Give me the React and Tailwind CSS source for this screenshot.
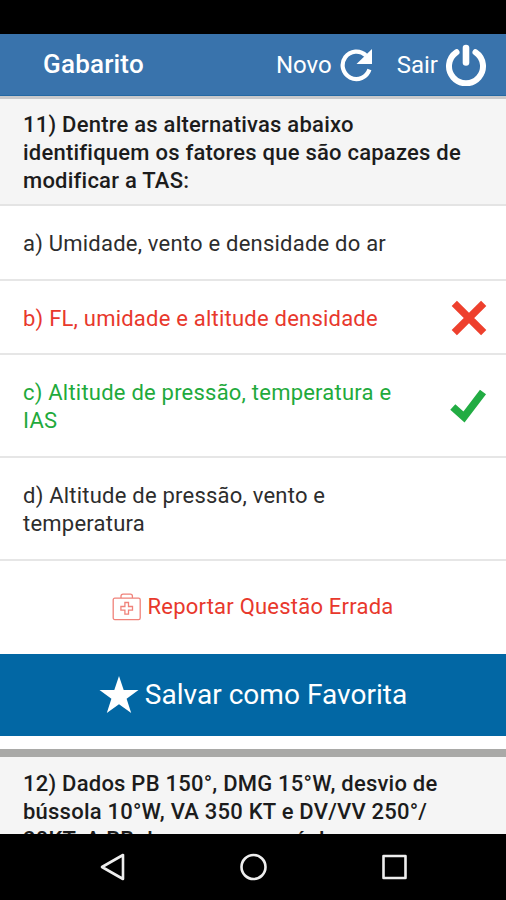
import React from "react";

const answers = [
  { text: "a) Umidade, vento e densidade do ar", box: "h-[75px] pt-[24px] text-[#2d2d2d]" },
  { text: "b) FL, umidade e altitude densidade", box: "h-[74px] pt-[24px] text-[#e8382c]", mark: "wrong" },
  { text: "c) Altitude de pressão, temperatura e IAS", box: "h-[103px] pt-[24px] text-[#1faa3c]", mark: "right" },
  { text: "d) Altitude de pressão, vento e temperatura", box: "h-[103px] pt-[24px] text-[#2d2d2d]" },
];

function RefreshIcon() {
  return (
    <svg width="34" height="34" viewBox="0 0 34 34" className="shrink-0">
      <path d="M30.4 21.5A13.7 13.7 0 1 1 27 7.6" fill="none" stroke="white" strokeWidth="4.2" />
      <path d="M33 1V16H17.5Z" fill="white" />
    </svg>
  );
}

function PowerIcon() {
  return (
    <svg width="42" height="42" viewBox="0 0 42 42" className="shrink-0">
      <path d="M11.5 8.2A17 17 0 1 0 30.5 8.2" fill="none" stroke="white" strokeWidth="6" strokeLinecap="round" />
      <path d="M21 4V18.5" stroke="white" strokeWidth="6.6" strokeLinecap="round" />
    </svg>
  );
}

function Mark({ type }) {
  if (type === "wrong") {
    return (
      <svg width="36" height="36" viewBox="0 0 36 36">
        <path d="M3.3 3.3L32.7 32.7M32.7 3.3L3.3 32.7" stroke="#ee402d" strokeWidth="7.4" />
      </svg>
    );
  }
  return (
    <svg width="38" height="36" viewBox="0 0 38 36">
      <path d="M3.8 19L15 29L34 4" fill="none" stroke="#22ac43" strokeWidth="7.6" />
    </svg>
  );
}

function KitIcon() {
  return (
    <svg width="30" height="28" viewBox="0 0 30 28" fill="none" stroke="#f0827a" strokeWidth="1.3" className="shrink-0">
      <rect x="1.2" y="5.2" width="27" height="21.4" rx="1.6" />
      <path d="M9 5V3.2Q9 1.2 11 1.2H18.4Q20.4 1.2 20.4 3.2V5" />
      <path d="M12.9 9.5H16.5V13.5H20.5V17.1H16.5V21.1H12.9V17.1H8.9V13.5H12.9Z" />
    </svg>
  );
}

export default function App() {
  return (
    <div className="flex h-[900px] w-[506px] flex-col overflow-hidden bg-white font-['Roboto',sans-serif] text-[22px] leading-7">
      <div className="h-[34px] shrink-0 bg-black" />

      <header className="flex h-[62px] shrink-0 items-center border-b border-[#2468a3] bg-[#3973ac] pr-[19px] pl-[43px] text-white">
        <h1 className="flex-1 pb-[2px] text-[26px] font-medium tracking-[0.2px]">Gabarito</h1>
        <button className="flex items-center gap-[7px] text-[24px]">
          Novo <RefreshIcon />
        </button>
        <button className="ml-[24px] flex items-center gap-[7px] text-[24px]">
          Sair <PowerIcon />
        </button>
      </header>

      <main className="flex min-h-0 flex-1 flex-col overflow-hidden">
        <div className="h-[110px] shrink-0 border-t-[3px] border-b-2 border-t-[#c9c9cb] border-b-[#e4e4e4] bg-[#f5f5f5] pt-[12px] pl-[23px] font-medium tracking-[0.23px] text-[#1c1c1c]">
          11) Dentre as alternativas abaixo<br />
          identifiquem os fatores que são capazes de<br />
          modificar a TAS:
        </div>

        {answers.map((a) => (
          <div key={a.text} className={`flex shrink-0 border-b-2 border-[#e6e6e6] pr-[19px] pl-[23px] tracking-[0.22px] ${a.box}`}>
            <p className="w-[390px]">{a.text}</p>
            {a.mark && (
              <div className="-mt-[23px] ml-auto flex items-center">
                <Mark type={a.mark} />
              </div>
            )}
          </div>
        ))}

        <button className="flex h-[93px] shrink-0 items-center justify-center gap-[5px] pb-[1px] tracking-[0.22px] text-[#e8382c]">
          <KitIcon /> Reportar Questão Errada
        </button>
        <button className="flex h-[82px] shrink-0 items-center justify-center gap-[6px] bg-[#0267a4] text-[28px] tracking-[0.03px] text-white">
          <svg width="40" height="38" viewBox="0 0 40 38" fill="white">
            <path d="M20 0L24.7 14H39.5L27.6 22.8L32.2 37L20 28.3L7.8 37L12.4 22.8L0.5 14H15.3Z" />
          </svg>
          Salvar como Favorita
        </button>

        <div className="mt-[13px] h-[85px] shrink-0 overflow-hidden border-t-[8px] border-[#a9a9a7] bg-[#f5f5f5] pt-[13px] pl-[23px] font-medium tracking-[0.23px] text-[#1c1c1c]">
          12) Dados PB 150°, DMG 15°W, desvio de<br />
          bússola 10°W, VA 350 KT e DV/VV 250°/<br />
          20KT. A RB de sua proa será de
        </div>
      </main>

      <nav className="flex h-[66px] shrink-0 items-center justify-center gap-[114px] bg-black">
        <svg width="27" height="28" viewBox="0 0 27 28" fill="none" stroke="#eee" strokeWidth="2.6" strokeLinejoin="round">
          <path d="M24 2V26L3 14Z" />
        </svg>
        <svg width="27" height="28" viewBox="0 0 27 28" fill="none" stroke="#eee" strokeWidth="2.6">
          <circle cx="13.5" cy="14" r="12" />
        </svg>
        <svg width="27" height="28" viewBox="0 0 27 28" fill="none" stroke="#eee" strokeWidth="2.6" strokeLinejoin="round">
          <rect x="2.5" y="3" width="22" height="22" />
        </svg>
      </nav>
    </div>
  );
}
